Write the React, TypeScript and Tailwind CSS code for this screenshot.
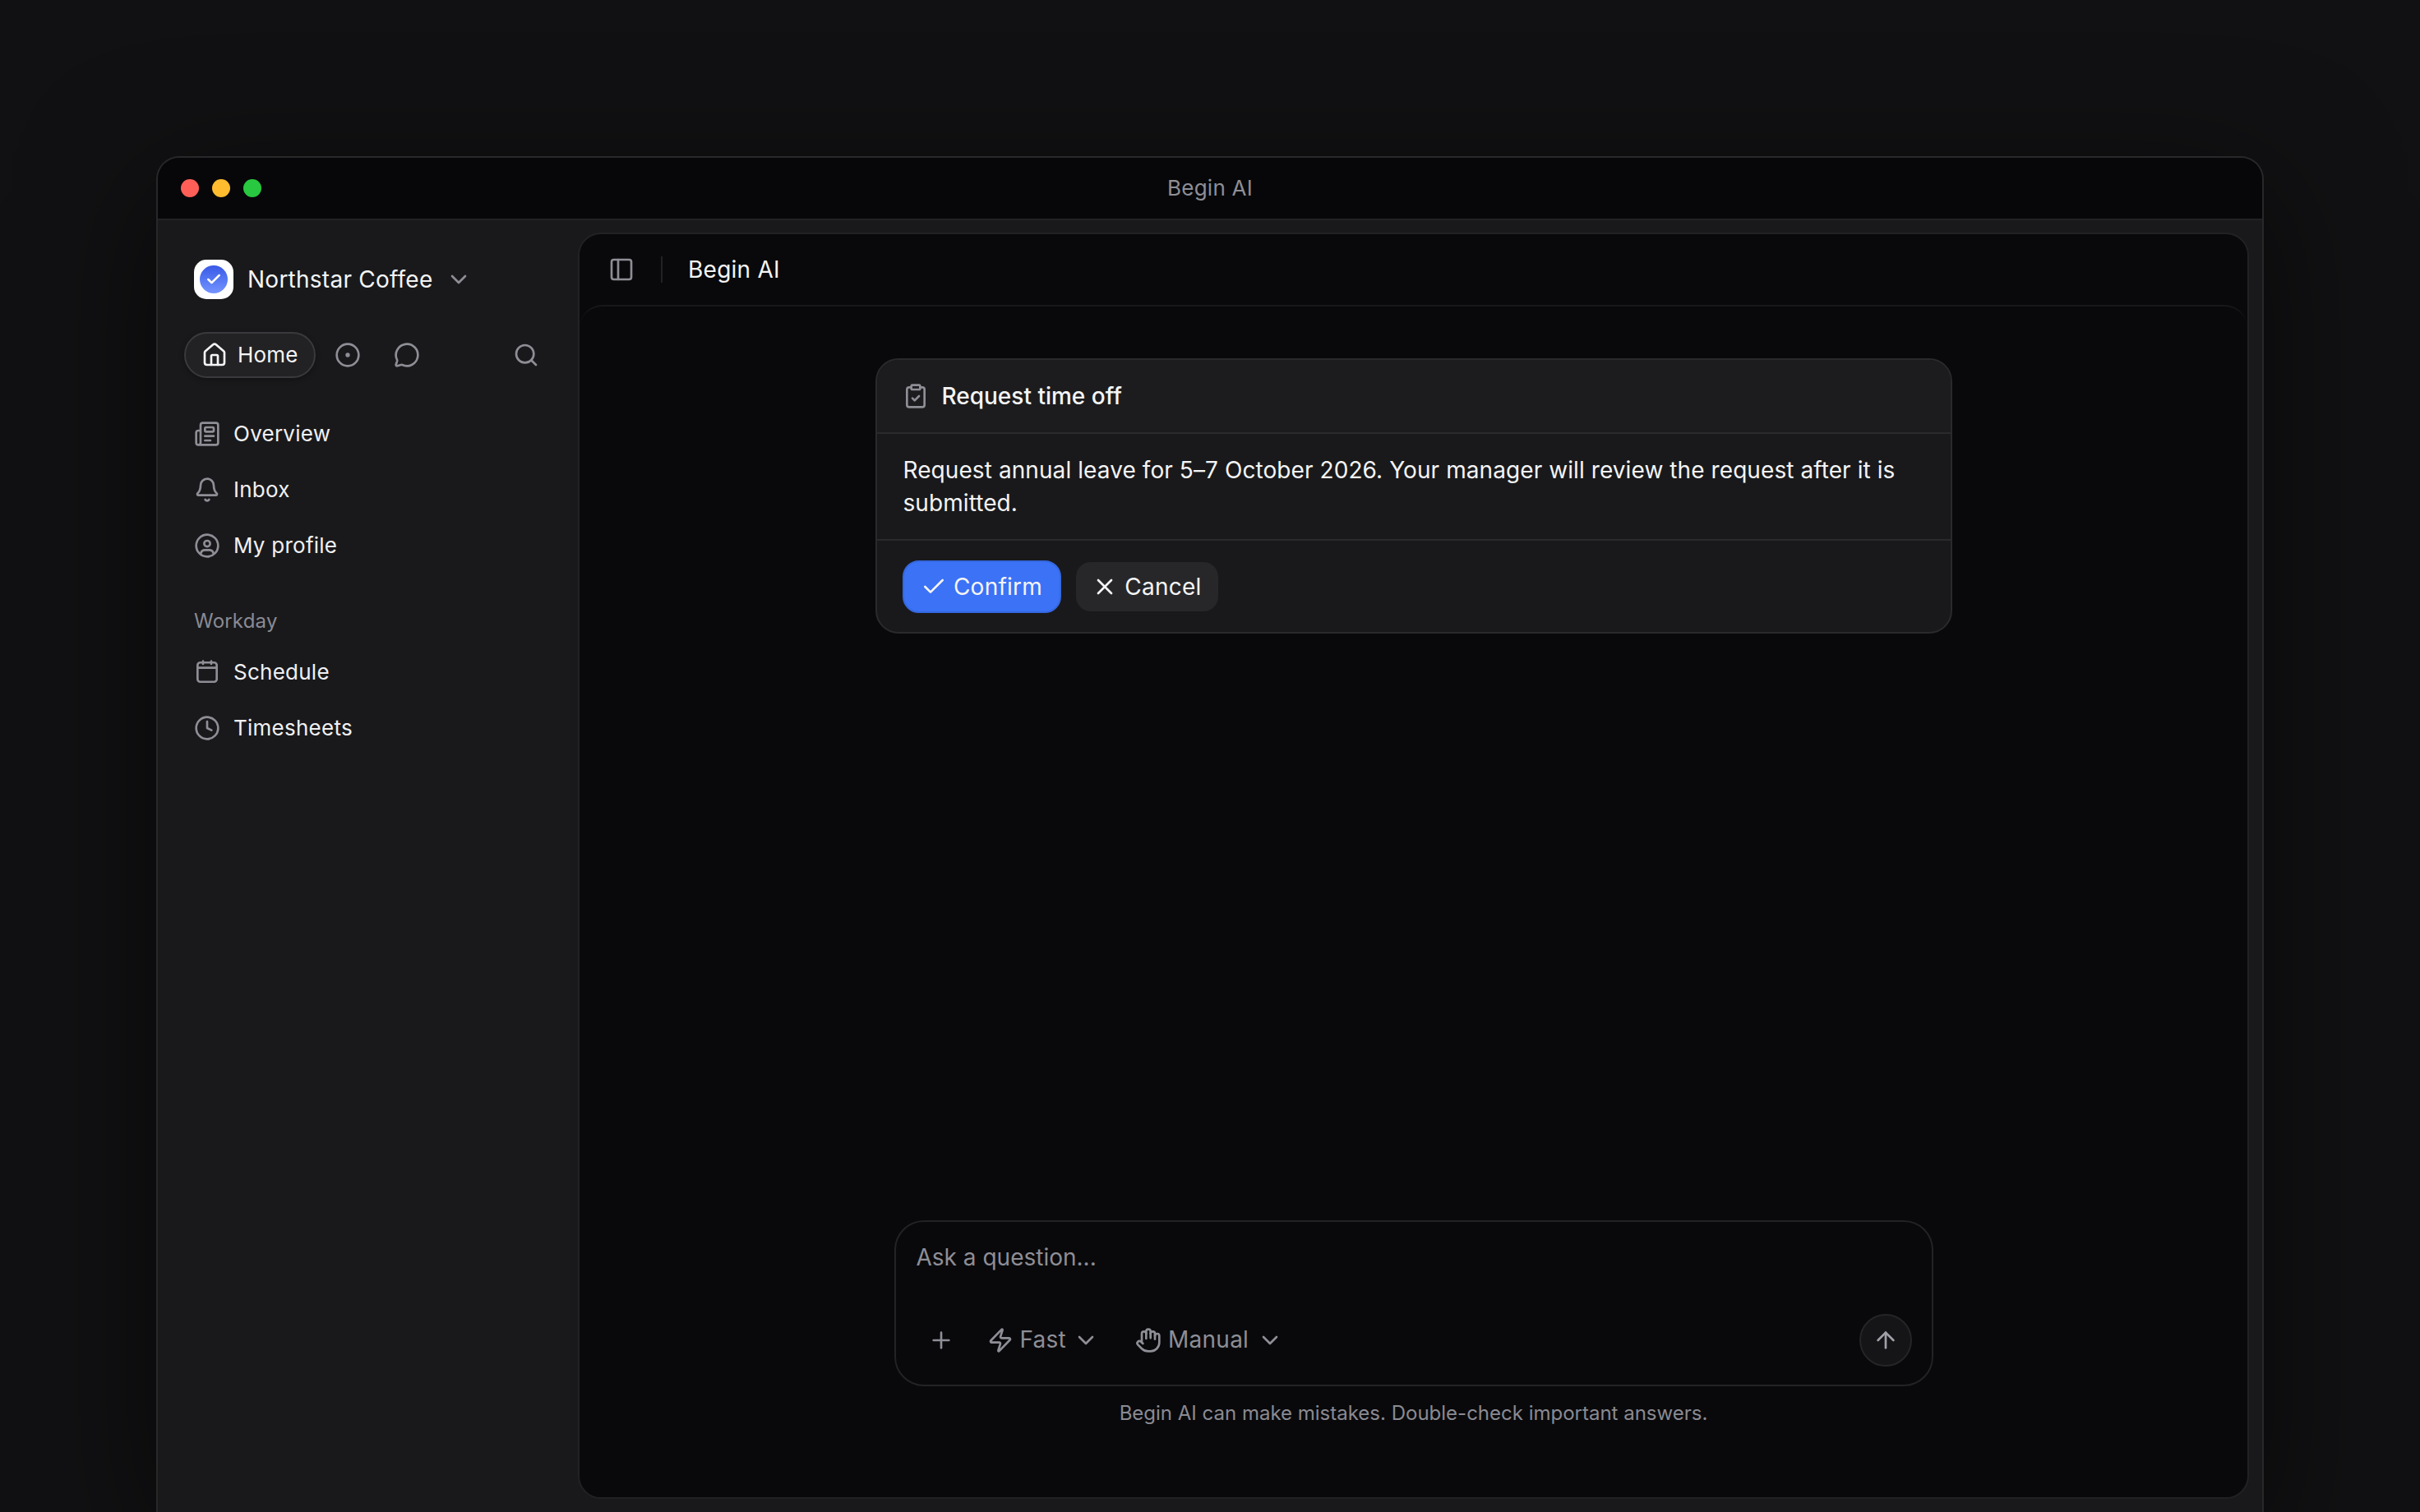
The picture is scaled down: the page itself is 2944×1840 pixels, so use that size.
import { ArrowUp, Bell, Check, ChevronDown, CircleDot, ClipboardCheck, Clock, Hand, House, MessageCircle, Newspaper, PanelLeft, Plus, Search, X, Zap } from 'lucide-react';

function ProfileIcon({ className }: { className?: string }) {
  return (
    <svg width={32} height={32} viewBox="0 0 24 24" fill="none" stroke="currentColor" strokeWidth={2} strokeLinecap="round" strokeLinejoin="round" className={className}>
      <circle cx="12" cy="12" r="10" />
      <circle cx="12" cy="10.2" r="2.7" />
      <path d="M6.2 19a4 4 0 0 1 3.8-3h4a4 4 0 0 1 3.8 3" />
    </svg>
  );
}

function ScheduleIcon({ className }: { className?: string }) {
  return (
    <svg width={32} height={32} viewBox="0 0 24 24" fill="none" stroke="currentColor" strokeWidth={2} strokeLinecap="round" strokeLinejoin="round" className={className}>
      <rect x="3.25" y="3.2" width="17.5" height="17.6" rx="2.5" />
      <path d="M3.25 8h17.5" />
      <path d="M8.25 2v2.5" />
      <path d="M15.75 2v2.5" />
    </svg>
  );
}

const mainLinks = [
  { label: 'Overview', icon: Newspaper },
  { label: 'Inbox', icon: Bell },
  { label: 'My profile', icon: ProfileIcon },
];

const workdayLinks = [
  { label: 'Schedule', icon: ScheduleIcon },
  { label: 'Timesheets', icon: Clock },
];

function NavRow({ label, icon: Icon }: { label: string; icon: typeof ProfileIcon | typeof Bell }) {
  return (
    <div className="flex h-[68px] items-center gap-[16px] pl-[11px] text-[26px] tracking-[0.25px] text-[#f0f0f2]">
      <Icon size={32} strokeWidth={2} className="text-[#8e8e96]" />
      <span className="pb-[2px]">{label}</span>
    </div>
  );
}

export default function App() {
  return (
    <div className="flex h-screen flex-col overflow-hidden bg-[#111113] px-[190px] pt-[190px] font-['Inter',sans-serif]">
      <div className="flex min-h-0 flex-1 flex-col rounded-t-[28px] border-2 border-b-0 border-[#28282b] bg-[#19191b] shadow-[0_40px_160px_rgba(0,0,0,0.55)]">
        {/* Title bar */}
        <div className="relative flex h-[76px] shrink-0 items-center gap-[16px] rounded-t-[26px] border-b-2 border-[#222225] bg-[#070709] pl-[28px]">
          <div className="h-[22px] w-[22px] rounded-full bg-[#ff5f57]" />
          <div className="h-[22px] w-[22px] rounded-full bg-[#febc2e]" />
          <div className="h-[22px] w-[22px] rounded-full bg-[#28c840]" />
          <div className="absolute inset-x-0 pb-[2px] text-center text-[26px] tracking-[0.25px] text-[#8e8e96]">Begin AI</div>
        </div>

        <div className="flex min-h-0 flex-1">
          {/* Sidebar */}
          <div className="w-[511px] shrink-0 pl-[32px] pr-[35px] pt-[48px]">
            <div className="flex h-[48px] items-center pl-[12px]">
              <div className="flex h-[48px] w-[48px] items-center justify-center rounded-[15px] bg-white">
                <div className="flex h-[34px] w-[34px] items-center justify-center rounded-full bg-gradient-to-b from-[#3a58e6] to-[#7594ff]">
                  <Check size={20} strokeWidth={3} className="text-white" />
                </div>
              </div>
              <span className="ml-[17px] text-[28px] tracking-[0.25px] text-[#f4f4f5]">Northstar Coffee</span>
              <ChevronDown size={32} strokeWidth={2} className="ml-[15px] text-[#8e8e96]" />
            </div>

            <div className="mt-[40px] flex h-[56px] items-center">
              <div className="flex h-[56px] items-center gap-[12px] rounded-full border-2 border-[#3a3a3e] bg-[#222224] pl-[19px] pr-[20px] text-[26px] tracking-[0.15px] text-[#f4f4f5] shadow-[0_2px_6px_rgba(0,0,0,0.3)]">
                <House size={32} strokeWidth={2} />
                <span className="pb-[2px]">Home</span>
              </div>
              <div className="ml-[11px] flex h-[56px] w-[56px] items-center justify-center text-[#8e8e96]">
                <CircleDot size={32} strokeWidth={2} />
              </div>
              <div className="ml-[16px] flex h-[56px] w-[56px] items-center justify-center text-[#8e8e96]">
                <MessageCircle size={32} strokeWidth={2} />
              </div>
              <div className="ml-auto flex h-[56px] w-[56px] items-center justify-center text-[#8e8e96]">
                <Search size={32} strokeWidth={2} />
              </div>
            </div>

            <div className="mt-[34px] pl-[1px]">
              {mainLinks.map((link) => (
                <NavRow key={link.label} label={link.label} icon={link.icon} />
              ))}
            </div>

            <div className="mt-[38px] flex h-[40px] items-center pl-[12px] text-[24px] tracking-[0.2px] text-[#8a8a94]">Workday</div>
            <div className="mt-[8px] pl-[1px]">
              {workdayLinks.map((link) => (
                <NavRow key={link.label} label={link.label} icon={link.icon} />
              ))}
            </div>
          </div>

          {/* Main panel */}
          <div className="mb-[16px] mr-[16px] mt-[15px] flex min-w-0 flex-1 flex-col rounded-[28px] border-2 border-[#222225] bg-[#09090b]">
            <div className="flex h-[86px] shrink-0 items-center pl-[35px]">
              <PanelLeft size={32} strokeWidth={2} className="text-[#8e8e96]" />
              <div className="ml-[32px] h-[32px] w-[2px] bg-[#222225]" />
              <span className="ml-[31px] text-[28px] tracking-[0.25px] text-[#f4f4f5]">Begin AI</span>
            </div>

            <div className="flex min-h-0 flex-1 flex-col items-center rounded-t-[28px] border-t-2 border-[#18181b] pb-[84px] pt-[63px]">
              {/* Request card */}
              <div className="w-[1310px] rounded-[28px] border-2 border-[#2a2a2d] bg-[#19191b] text-[#f4f4f5]">
                <div className="flex h-[90px] items-center gap-[16px] rounded-t-[26px] border-b-2 border-[#2a2a2d] bg-[#1c1c1e] pl-[31px]">
                  <ClipboardCheck size={32} strokeWidth={2} className="text-[#8e8e96]" />
                  <span className="text-[28px] font-medium">Request time off</span>
                </div>
                <div className="border-b-2 border-[#2a2a2d] px-[32px] py-[24px] text-[28px] leading-[40px] tracking-[0.08px]">
                  Request annual leave for 5–7 October 2026. Your manager will review the request after it is submitted.
                </div>
                <div className="flex h-[111px] items-center gap-[18px] pl-[31px] text-[28px] tracking-[0.25px]">
                  <button className="flex h-[64px] w-[193px] items-center justify-center gap-[8px] rounded-[20px] border-2 border-[#3568e0] bg-[#3b72f6]">
                    <Check size={32} strokeWidth={2} />
                    <span>Confirm</span>
                  </button>
                  <button className="flex h-[60px] w-[173px] items-center justify-center gap-[8px] rounded-[18px] bg-[#27272a]">
                    <X size={32} strokeWidth={2} />
                    <span>Cancel</span>
                  </button>
                </div>
              </div>

              {/* Composer */}
              <div className="mt-auto flex h-[202px] w-[1264px] flex-col rounded-[36px] border-2 border-[#232326] pb-[22px] pl-[25px] pr-[24px] pt-[25px]">
                <div className="text-[28px] leading-[36px] text-[#8e8e96]">Ask a question...</div>
                <div className="mt-auto flex h-[64px] items-center text-[28px] tracking-[0.25px] text-[#8e8e96]">
                  <Plus size={32} strokeWidth={2} className="ml-[14px]" />
                  <Zap size={32} strokeWidth={2} className="ml-[40px]" />
                  <span className="ml-[8px] pb-[2px]">Fast</span>
                  <ChevronDown size={32} strokeWidth={2} className="ml-[8px]" />
                  <Hand size={32} strokeWidth={2} className="ml-[44px]" />
                  <span className="ml-[8px] pb-[2px]">Manual</span>
                  <ChevronDown size={32} strokeWidth={2} className="ml-[10px]" />
                  <div className="ml-auto flex h-[64px] w-[64px] items-center justify-center rounded-full border-2 border-[#252528] bg-[#151517] text-[#a0a0a8]">
                    <ArrowUp size={32} strokeWidth={2} />
                  </div>
                </div>
              </div>
              <div className="mt-[15px] text-center text-[24px] leading-[36px] text-[#8a8a92]">
                Begin AI can make mistakes. Double-check important answers.
              </div>
            </div>
          </div>
        </div>
      </div>
    </div>
  );
}
